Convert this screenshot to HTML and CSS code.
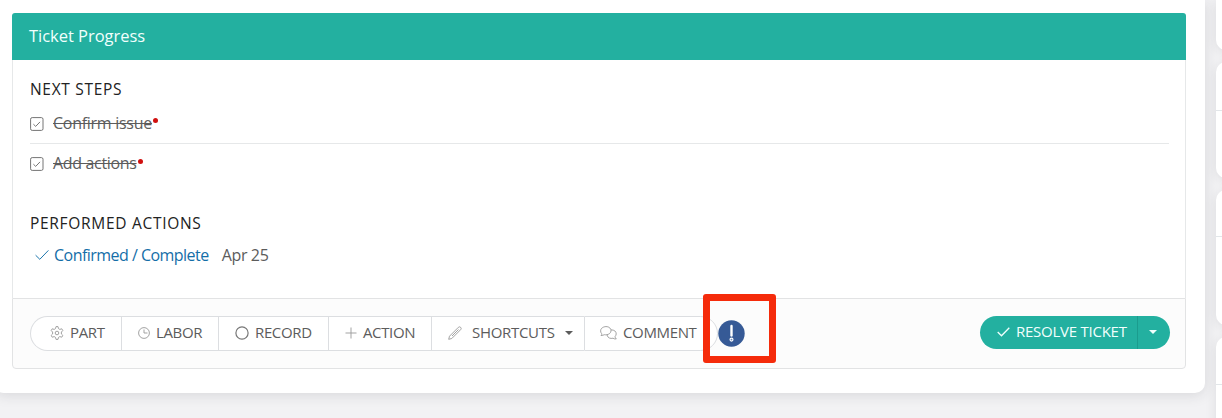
FILE: index.html
```html
<!DOCTYPE html>
<html lang="en">
<head>
<meta charset="utf-8">
<title>Ticket Progress</title>
<link rel="stylesheet" href="styles.css">
</head>
<body>
<div class="page">
  <main class="card">
    <section class="panel">
      <header class="panel-head"><span class="title">Ticket Progress</span></header>
      <div class="panel-body">
        <h2 class="heading next">NEXT STEPS</h2>
        <ul class="steps">
          <li class="step">
            <svg class="check-box" viewBox="0 0 14 14"><rect x=".6" y=".6" width="12.4" height="12.8" rx="1.6"/><path d="M3.4 7.2 5.7 9.4 10 4.9"/></svg>
            <s class="step-name">Confirm issue</s><i class="dot"></i>
          </li>
          <li class="step">
            <svg class="check-box" viewBox="0 0 14 14"><rect x=".6" y=".6" width="12.4" height="12.8" rx="1.6"/><path d="M3.4 7.2 5.7 9.4 10 4.9"/></svg>
            <s class="step-name">Add actions</s><i class="dot"></i>
          </li>
        </ul>
        <h2 class="heading performed">PERFORMED ACTIONS</h2>
        <div class="done">
          <svg class="done-check" viewBox="0 0 14 12"><path d="M.6 6.2 4.8 10.3 13.4 1.4"/></svg>
          <a class="done-name">Confirmed / Complete</a>
          <span class="done-date">Apr 25</span>
        </div>
      </div>
      <footer class="panel-foot">
        <div class="group">
          <button class="btn part"><svg class="icon" width="14" height="14" viewBox="0 0 14 14"><path d="M5.500 2.600 6 .6h2l.5 2 1.300.8 2-.6 1 1.800-1.400 1.400v2l1.400 1.400-1 1.800-2-.6-1.300.8-.5 2H6l-.5-2-1.300-.8-2 .6-1-1.800L2.600 8V6L1.200 4.600l1-1.800 2 .6z"/><circle cx="7" cy="7" r="1.800"/></svg><span>PART</span></button>
          <button class="btn labor"><svg class="icon" width="12" height="12" viewBox="0 0 12 12"><circle cx="6" cy="6" r="5.400"/><path d="M6 2.500V6h3.500"/></svg><span>LABOR</span></button>
          <button class="btn record"><svg class="icon dark" width="14" height="14" viewBox="0 0 14 14"><circle cx="7" cy="7" r="6.100"/></svg><span>RECORD</span></button>
          <button class="btn action"><svg class="icon" width="12" height="12" viewBox="0 0 12 12"><path d="M6 .5v11M.5 6h11"/></svg><span>ACTION</span></button>
          <button class="btn shortcuts"><svg class="icon" width="14" height="14" viewBox="0 0 14 14"><path d="M.7 13.300 1.500 10.200 10.400 1.300Q11.500.3 12.700 1.400 13.700 2.500 12.700 3.600L3.800 12.500ZM4 10 10.500 3.500"/></svg><span>SHORTCUTS</span><i class="caret"></i></button>
          <button class="btn comment"><svg class="icon" width="17" height="14" viewBox="0 0 17 14"><path d="M1 9.500Q2.200 8.500 1.600 7.500C.3 6.200.2 3.600 1.800 2.200 4 .1 8 .1 9.900 2c1.700 1.700 1.400 4.200-.3 5.500C8 8.800 6 9 4.300 8.700Q3 9.500 1 9.500ZM11 3.900c3.300-.2 5.300 1.700 5.200 4 0 1-.5 1.900-1.100 2.500Q15 12 16.300 12.900 14.300 13.200 13 12.200C10.500 12.900 7.700 12 7 9"/></svg><span>COMMENT</span></button>
          <div class="callout">
            <svg class="alert" width="27" height="27" viewBox="0 0 27 27"><circle cx="13.500" cy="13.500" r="13.200" fill="#365a96"/><path d="M13.500 6v9.500" stroke="#fff" stroke-width="2.400" stroke-linecap="round"/><circle cx="13.500" cy="19.600" r="1.500" fill="#6f8bb9" stroke="#fff" stroke-width="1.100"/></svg>
          </div>
        </div>
        <div class="resolve">
          <button class="resolve-main"><svg width="13" height="10" viewBox="0 0 13 10"><path d="M.7 5 4.500 8.800 12.300.8" fill="none" stroke="currentColor" stroke-width="1.300"/></svg><span>RESOLVE TICKET</span></button>
          <button class="resolve-more" aria-label="More"><i class="caret"></i></button>
        </div>
      </footer>
    </section>
  </main>
  <aside class="side">
    <div class="side-card first"></div>
    <div class="side-card second"><div class="side-head"></div></div>
    <div class="side-card third"><div class="side-head"></div></div>
    <div class="side-card fourth"><div class="side-head"></div></div>
  </aside>
</div>
</body>
</html>
```
FILE: styles.css
```css
* { box-sizing: border-box; }
body {
  margin: 0;
  background: #f2f2f4;
  font-family: "Open Sans", "Noto Sans", sans-serif;
  font-size: 16px;
  color: #5c5c5c;
}
.page { display: flex; width: 1222px; height: 418px; overflow: hidden; }
.card {
  flex: none;
  width: 1211px;
  height: 393px;
  margin-left: -6px;
  padding: 13px 19px 24px 18px;
  background: #fff;
  border-radius: 0 0 10px 10px;
  box-shadow: 0 2px 14px rgba(40, 40, 45, .13);
}
.panel { display: flex; flex-direction: column; height: 356px; }
.panel-head {
  display: flex;
  align-items: center;
  height: 47px;
  padding: 0 0 2px 17px;
  background: #23b0a0;
  border-radius: 3px 3px 0 0;
  color: #f1fffd;
  font-size: 16.5px;
}
.title { white-space: nowrap; letter-spacing: -.03px; }
.panel-body {
  height: 238px;
  padding: 18px 16px 0 17px;
  border: solid #e6e8e9;
  border-width: 0 1px;
}
.heading {
  margin: 0;
  height: 22px;
  font-size: 15.5px;
  font-weight: 400;
  line-height: 22px;
  letter-spacing: .7px;
  color: #222;
}
.steps { margin: 0; padding: 3px 0 0; list-style: none; }
.step { display: flex; align-items: center; height: 40px; }
.step + .step { border-top: 1px solid #e6e8e9; }
.step-name { letter-spacing: -.28px; margin-top: -1px; }
.check-box {
  width: 14px;
  height: 14px;
  margin-right: 9px;
  margin-top: 1px;
  fill: none;
  stroke: #747474;
}
.step + .step .step-name { margin-top: -2px; letter-spacing: -.33px; }
.step + .step .check-box { margin-top: 0; }
.dot { width: 5px; height: 5px; margin: -5px 0 0 1px; border-radius: 50%; background: #d0100f; }
.performed { margin-top: 29px; }
.done { display: flex; align-items: center; height: 42px; padding-left: 5px; white-space: nowrap; }
.done-check { width: 14px; height: 12px; margin-right: 5px; fill: none; stroke: #1c76ad; }
.done-name { margin-right: 13px; color: #146ea8; letter-spacing: -.53px; }
.done-date { letter-spacing: -.35px; }
.panel-foot {
  display: flex;
  justify-content: space-between;
  align-items: flex-start;
  height: 71px;
  padding: 17px 15px 0 17px;
  background: #fcfcfc;
  border: 1px solid #e2e3e4;
  border-radius: 0 0 4px 4px;
}
.group { position: relative; display: flex; width: 688px; height: 35px; }
button { font: inherit; color: inherit; margin: 0; border: 0; }
.btn {
  display: flex;
  align-items: center;
  flex: none;
  height: 35px;
  padding: 0 0 1px;
  background: #fff;
  border: 1px solid #dcdee1;
  border-right-width: 0;
  font-size: 15px;
  letter-spacing: -.36px;
  white-space: nowrap;
}
.btn span, .resolve-main span { margin-bottom: 2px; }
.icon { flex: none; fill: none; stroke: #999; stroke-width: .9; }
.dark { stroke: #777; stroke-width: 1.2; }
.part { width: 91px; padding-left: 19px; gap: 6px; border-radius: 18px 0 0 18px; }
.labor { width: 97px; padding-left: 16px; gap: 6px; }
.record { width: 110px; padding-left: 16px; gap: 6px; }
.action { width: 103px; padding-left: 16px; gap: 6px; }
.shortcuts { width: 153px; padding-left: 16px; gap: 10px; }
.shortcuts span { letter-spacing: -.3px; }
.comment { width: 134px; padding-left: 15px; gap: 6px; border-right-width: 1px; border-radius: 0 18px 18px 0; }
.caret { border: solid transparent; border-width: 4px 4px 0; border-top-color: currentColor; }
.callout {
  position: absolute;
  left: 673px;
  top: -22px;
  width: 73px;
  height: 69px;
  padding: 19px 0 0 8px;
  border: 7px solid #f52b0b;
  border-radius: 3px;
}
.alert { display: block; }
.resolve { display: flex; height: 33px; color: #f1fffd; }
.resolve-main, .resolve-more {
  display: flex;
  align-items: center;
  padding: 0 0 2px;
  background: #23b0a0;
  font-size: 15px;
  letter-spacing: -.25px;
}
.resolve-main {
  width: 157px;
  padding-left: 17px;
  gap: 6px;
  border-radius: 17px 0 0 17px;
  white-space: nowrap;
}
.resolve-more {
  justify-content: center;
  width: 33px;
  padding: 0 2px 2px 0;
  border-left: 1px solid #1b9c8e;
  border-radius: 0 17px 17px 0;
}
.side { display: flex; flex-direction: column; flex: none; gap: 12px; width: 300px; margin-left: 11px; }
.side-card {
  flex: none;
  background: #fff;
  border-radius: 10px;
  box-shadow: 0 2px 12px rgba(40, 40, 45, .1);
}
.side-head { height: 48px; border-bottom: 1px solid #e2e6e9; }
.first { height: 50px; border-radius: 0 0 10px 10px; }
.second { height: 116px; }
.second .side-head { height: 49px; }
.third { height: 135px; }
.third .side-head { height: 47px; }
.fourth { height: 140px; }
```
